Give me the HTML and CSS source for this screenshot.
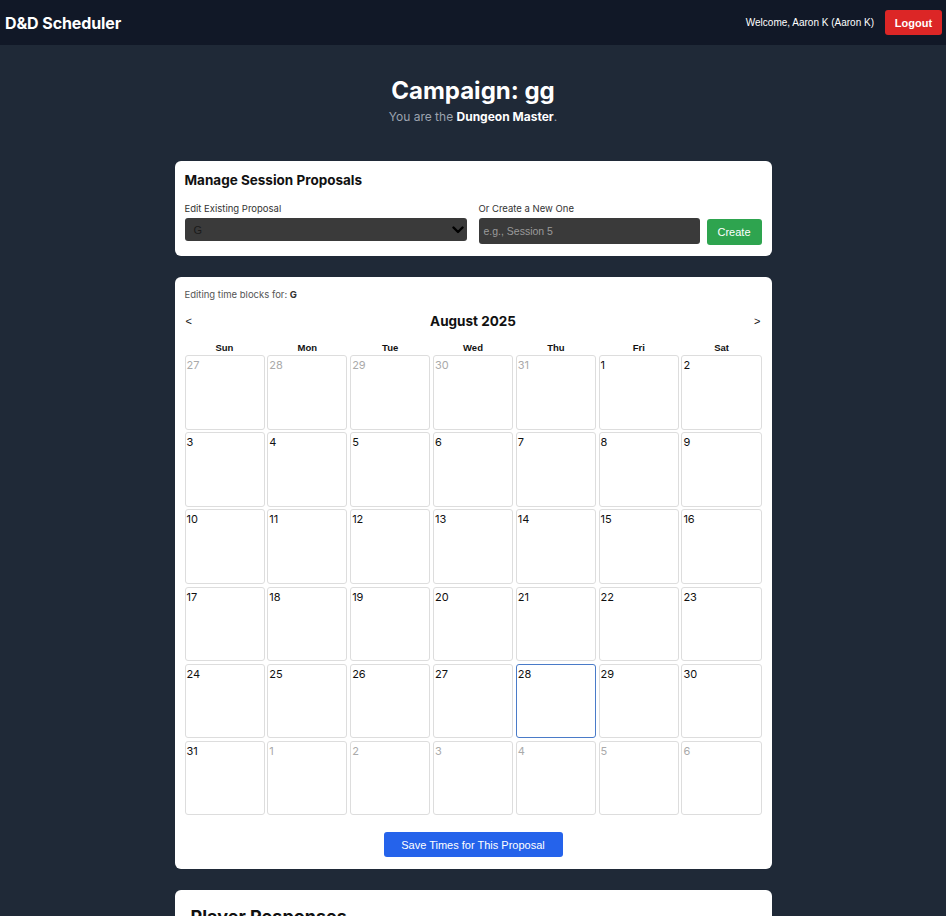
FILE: index.html
```html
<!DOCTYPE html>
<html>
<head>
<meta charset="utf-8">
<link rel="stylesheet" href="styles.css">
</head>
<body>
<nav class="navbar">
  <div class="brand">D&amp;D Scheduler</div>
  <div class="nav-right">
    <span class="welcome">Welcome, Aaron K (Aaron K)</span>
    <button class="logout">Logout</button>
  </div>
</nav>
<main class="main">
  <header class="page-head">
    <h1 class="title">Campaign: gg</h1>
    <p class="subtitle">You are the <strong>Dungeon Master</strong>.</p>
  </header>

  <section class="card card-proposals">
    <h2 class="card-title">Manage Session Proposals</h2>
    <div class="proposal-row">
      <div class="field">
        <label class="label">Edit Existing Proposal</label>
        <div class="select">
          <span>G</span>
          <svg width="12" height="8" viewBox="0 0 12 8"><path d="M1.5 1.5 L6 6 L10.5 1.5" fill="none" stroke="#000" stroke-width="2.4" stroke-linecap="round" stroke-linejoin="round"/></svg>
        </div>
      </div>
      <div class="field">
        <label class="label">Or Create a New One</label>
        <div class="create-row">
          <div class="input">e.g., Session 5</div>
          <button class="btn-create">Create</button>
        </div>
      </div>
    </div>
  </section>

  <section class="card card-calendar">
    <p class="editing">Editing time blocks for: <strong>G</strong></p>
    <div class="cal-nav">
      <span class="arrow">&lt;</span>
      <span class="month">August 2025</span>
      <span class="arrow">&gt;</span>
    </div>
    <div class="weekdays">
      <span>Sun</span><span>Mon</span><span>Tue</span><span>Wed</span><span>Thu</span><span>Fri</span><span>Sat</span>
    </div>
    <div class="grid">
      <div class="cell other">27</div><div class="cell other">28</div><div class="cell other">29</div><div class="cell other">30</div><div class="cell other">31</div><div class="cell">1</div><div class="cell">2</div>
      <div class="cell">3</div><div class="cell">4</div><div class="cell">5</div><div class="cell">6</div><div class="cell">7</div><div class="cell">8</div><div class="cell">9</div>
      <div class="cell">10</div><div class="cell">11</div><div class="cell">12</div><div class="cell">13</div><div class="cell">14</div><div class="cell">15</div><div class="cell">16</div>
      <div class="cell">17</div><div class="cell">18</div><div class="cell">19</div><div class="cell">20</div><div class="cell">21</div><div class="cell">22</div><div class="cell">23</div>
      <div class="cell">24</div><div class="cell">25</div><div class="cell">26</div><div class="cell">27</div><div class="cell today">28</div><div class="cell">29</div><div class="cell">30</div>
      <div class="cell">31</div><div class="cell other">1</div><div class="cell other">2</div><div class="cell other">3</div><div class="cell other">4</div><div class="cell other">5</div><div class="cell other">6</div>
    </div>
    <div class="save-wrap">
      <button class="btn-save">Save Times for This Proposal</button>
    </div>
  </section>

  <section class="card card-players">
    <h2 class="players-title">Player Responses</h2>
  </section>
</main>
</body>
</html>
```

FILE: styles.css
```css
* { box-sizing: border-box; }
html, body { margin: 0; padding: 0; }
body {
  background: #1f2937;
  font-family: Inter, "Liberation Sans", sans-serif;
  color: #111;
  height: 916px;
  overflow: hidden;
}
.navbar {
  height: 45px;
  background: #111827;
  display: flex;
  align-items: center;
  justify-content: space-between;
  padding: 0 4px 0 5px;
}
.brand {
  color: #fff;
  font-weight: 700;
  font-size: 16px;
  letter-spacing: -0.1px;
}
.nav-right { display: flex; align-items: center; gap: 11px; }
.welcome {
  color: #fff;
  font-family: "Liberation Sans", Arial, sans-serif;
  font-size: 10px;
}
.logout {
  background: #dc2626;
  color: #fff;
  border: none;
  border-radius: 3px;
  font-family: "Liberation Sans", Arial, sans-serif;
  font-weight: 700;
  font-size: 11px;
  width: 57px;
  height: 25px;
  padding: 0;
}
.main {
  width: 597px;
  margin: 0 auto;
}
.page-head { text-align: center; padding-top: 31px; }
.title {
  margin: 0;
  color: #fff;
  font-size: 24px;
  font-weight: 700;
  line-height: 30px;
}
.subtitle {
  margin: 3px 0 0;
  color: #9ca3af;
  font-size: 12px;
  line-height: 16px;
}
.subtitle strong { color: #fff; font-weight: 700; }
.card {
  background: #fff;
  border-radius: 6px;
}
.card-proposals {
  margin-top: 36px;
  padding: 11px 10px 11px 10px;
  height: 95px;
}
.card-title {
  margin: 0;
  font-size: 13.5px;
  font-weight: 700;
  line-height: 17px;
}
.proposal-row {
  display: grid;
  grid-template-columns: 282px 1fr;
  gap: 12px;
  margin-top: 14px;
}
.label {
  display: block;
  font-size: 9.5px;
  color: #333;
  line-height: 12px;
  margin-bottom: 3px;
}
.select {
  height: 23px;
  background: #3a3a3a;
  border-radius: 3px;
  display: flex;
  align-items: center;
  justify-content: space-between;
  padding: 0 3px 0 9px;
  font-family: "Liberation Sans", Arial, sans-serif;
  font-size: 11px;
  color: #1a1a1a;
}
.create-row { display: flex; gap: 7px; margin-top: 0; }
.input {
  flex: 1;
  height: 26px;
  background: #3a3a3a;
  border-radius: 3px;
  display: flex;
  align-items: center;
  padding-left: 5px;
  font-family: "Liberation Sans", Arial, sans-serif;
  font-size: 10.5px;
  color: #9a9a9a;
}
.btn-create {
  width: 55px;
  height: 26px;
  margin-top: 1px;
  background: #2ea44f;
  color: #fff;
  border: none;
  border-radius: 3px;
  font-family: "Liberation Sans", Arial, sans-serif;
  font-size: 11px;
  padding: 0;
}
.card-calendar {
  margin-top: 21px;
  padding: 12px 10px 12px 10px;
  height: 592px;
}
.editing {
  margin: 0;
  font-size: 9.5px;
  color: #555;
  line-height: 12px;
}
.editing strong { color: #333; }
.cal-nav {
  display: flex;
  justify-content: space-between;
  align-items: center;
  margin-top: 11px;
  height: 18px;
}
.arrow {
  font-family: "Liberation Sans", Arial, sans-serif;
  font-size: 11px;
  padding: 0 1px;
  color: #111;
}
.month { font-size: 13.5px; font-weight: 700; }
.weekdays {
  display: grid;
  grid-template-columns: repeat(7, 1fr);
  gap: 3px;
  margin-top: 12px;
  text-align: center;
  font-family: "Liberation Sans", Arial, sans-serif;
  font-weight: 700;
  font-size: 9.5px;
  line-height: 11px;
  height: 12px;
}
.grid {
  display: grid;
  grid-template-columns: repeat(7, 1fr);
  grid-auto-rows: 74.5px;
  gap: 2.7px;
  margin-top: 1px;
}
.cell {
  border: 1px solid #ddd;
  border-radius: 3px;
  padding: 2px 1px;
  font-size: 11px;
  line-height: 14px;
  color: #111;
}
.cell.other { color: #aaa; }
.cell.today { border-color: #4a7bc8; }
.save-wrap {
  display: flex;
  justify-content: center;
  margin-top: 17px;
}
.btn-save {
  width: 179px;
  height: 25px;
  background: #2563eb;
  color: #fff;
  border: none;
  border-radius: 3px;
  font-family: "Liberation Sans", Arial, sans-serif;
  font-size: 11px;
  padding: 0;
}
.card-players {
  margin-top: 21px;
  padding: 16px 16px;
  height: 120px;
}
.players-title {
  margin: 0;
  font-size: 18px;
  font-weight: 700;
  line-height: 22px;
}
```
